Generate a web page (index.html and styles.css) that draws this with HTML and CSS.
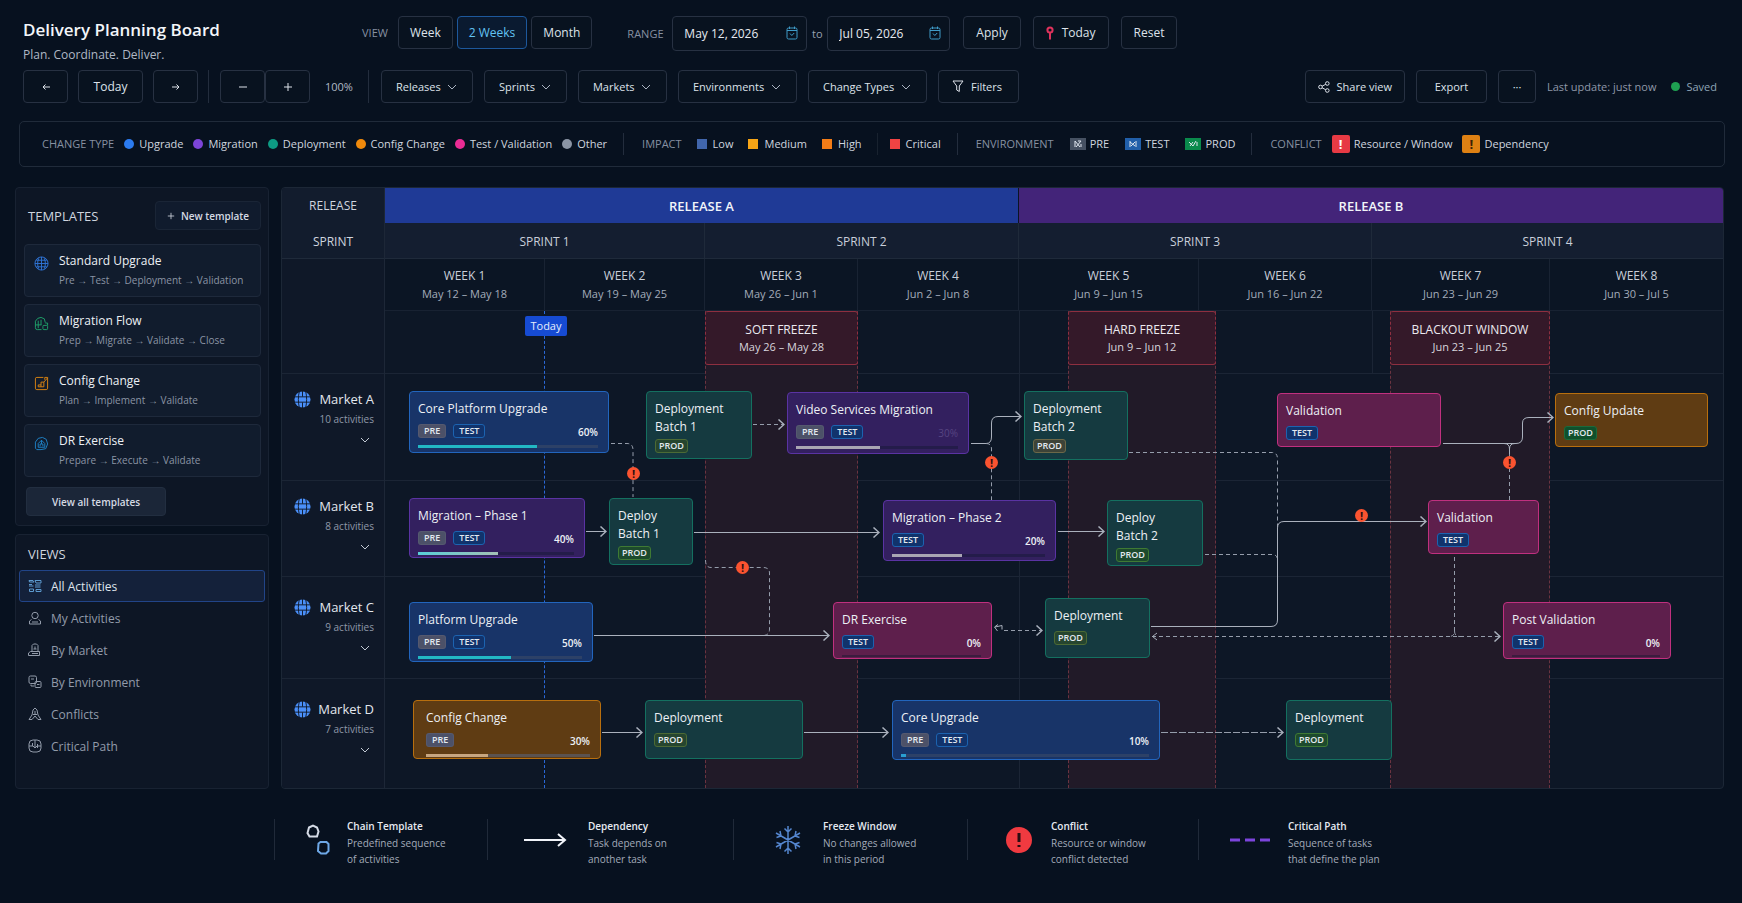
FILE: index.html
```html
<!DOCTYPE html>
<html lang="en">
<head>
    <meta charset="UTF-8">
    <meta name="viewport" content="width=device-width, initial-scale=1.0">
    <link rel="stylesheet" href="styles.css">
    <title>Delivery Planning Board</title>
</head>
<body>
    <!-- shared icons -->
    <svg class="sprite" aria-hidden="true">
        <symbol id="chevron" viewBox="0 0 10 6"><path d="M1 1l4 4 4-4"/></symbol>
        <symbol id="globe" viewBox="0 0 18 18">
            <circle cx="9" cy="9" r="8.5" fill="#4a8ff8" stroke="none"/>
            <path d="M0 6.2h18M0 11.8h18M9 0v6M9 12v6M5.800 0C4.200 5.500 4.200 12.500 5.800 18M12.200 0c1.600 5.500 1.600 12.500 0 18" stroke="#101a2b" stroke-width="1" fill="none"/>
        </symbol>
        <symbol id="calendar" viewBox="0 0 12 14">
            <rect x="1" y="2" width="10" height="11" rx="1.500"/>
            <path d="M1 4.500h10M3.500 .5v2.500M8.500 .5v2.500M4 7.500l1.800 2L8.200 7"/>
        </symbol>
    </svg>

    <header class="top">
        <div class="top-row">
            <div class="brand">
                <h1>Delivery Planning Board</h1>
                <p>Plan. Coordinate. Deliver.</p>
            </div>
            <div class="view-switch">
                <span class="caption">VIEW</span>
                <button class="btn">Week</button>
                <button class="btn active">2 Weeks</button>
                <button class="btn">Month</button>
            </div>
            <div class="range">
                <label class="caption" for="from">RANGE</label>
                <div class="date date-from">
                    <input type="text" id="from" value="May 12, 2026">
                    <svg class="ico-cal"><use href="#calendar"/></svg>
                </div>
                <label class="to" for="until">to</label>
                <div class="date date-until">
                    <input type="text" id="until" value="Jul 05, 2026">
                    <svg class="ico-cal"><use href="#calendar"/></svg>
                </div>
            </div>
            <div class="range-actions">
                <button class="btn">Apply</button>
                <button class="btn">
                    <svg class="ico-pin" viewBox="0 0 8 14"><circle cx="4" cy="4" r="2.600"/><path d="M4 7v6.500"/></svg>
                    Today
                </button>
                <button class="btn">Reset</button>
            </div>
        </div>

        <div class="top-row tools">
            <div class="nav">
                <button class="btn icon-btn" aria-label="Back"><svg class="ico-sign" viewBox="0 0 10 10"><path d="M9 5H2M4.500 2.500L2 5l2.500 2.500"/></svg></button>
                <button class="btn">Today</button>
                <button class="btn icon-btn" aria-label="Forward"><svg class="ico-sign" viewBox="0 0 10 10"><path d="M1 5h7M5.500 2.500L8 5 5.500 7.500"/></svg></button>
            </div>
            <div class="zoom">
                <button class="btn icon-btn" aria-label="Zoom out"><svg class="ico-sign" viewBox="0 0 10 10"><path d="M1 5h8"/></svg></button>
                <button class="btn icon-btn" aria-label="Zoom in"><svg class="ico-sign" viewBox="0 0 10 10"><path d="M1 5h8M5 1v8"/></svg></button>
                <span class="percent">100%</span>
            </div>
            <div class="filters">
                <div class="dropdown"><select class="btn" aria-label="Releases"><option>Releases</option></select><svg class="chev"><use href="#chevron"/></svg></div>
                <div class="dropdown"><select class="btn" aria-label="Sprints"><option>Sprints</option></select><svg class="chev"><use href="#chevron"/></svg></div>
                <div class="dropdown"><select class="btn" aria-label="Markets"><option>Markets</option></select><svg class="chev"><use href="#chevron"/></svg></div>
                <div class="dropdown"><select class="btn" aria-label="Environments"><option>Environments</option></select><svg class="chev"><use href="#chevron"/></svg></div>
                <div class="dropdown"><select class="btn" aria-label="Change Types"><option>Change Types</option></select><svg class="chev"><use href="#chevron"/></svg></div>
                <button class="btn">
                    <svg class="ico-filter" viewBox="0 0 12 13"><path d="M1 1h10L7.300 6v5.500L4.700 10V6z"/></svg>
                    Filters
                </button>
            </div>
            <div class="share">
                <button class="btn">
                    <svg class="ico-share" viewBox="0 0 12 12"><circle cx="2.500" cy="6" r="1.800"/><circle cx="9.300" cy="2.500" r="1.800"/><circle cx="9.300" cy="9.500" r="1.800"/><path d="M4.100 5.200l3.600-1.900M4.100 6.800l3.600 1.900"/></svg>
                    Share view
                </button>
                <button class="btn wide">Export</button>
                <button class="btn more" aria-label="More">···</button>
                <span class="updated">Last update: just now</span>
                <span class="saved">Saved</span>
            </div>
        </div>
    </header>

    <section class="legend">
        <div class="legend-group types">
            <span class="caption">CHANGE TYPE</span>
            <span class="key dot blue">Upgrade</span>
            <span class="key dot purple">Migration</span>
            <span class="key dot green">Deployment</span>
            <span class="key dot orange">Config Change</span>
            <span class="key dot pink">Test / Validation</span>
            <span class="key dot gray">Other</span>
        </div>
        <div class="legend-group impact">
            <span class="caption">IMPACT</span>
            <span class="key square low">Low</span>
            <span class="key square medium">Medium</span>
            <span class="key square high">High</span>
            <span class="key square critical">Critical</span>
        </div>
        <div class="legend-group envs">
            <span class="caption">ENVIRONMENT</span>
            <span class="key"><svg class="env pre" viewBox="0 0 16 12"><path d="M5 3v6M5 3l5 6M8 3h3M11 3L6 9M11 6v3"/></svg>PRE</span>
            <span class="key"><svg class="env test" viewBox="0 0 16 12"><path d="M5 3v6M5 4l5 4M11 3v6M10 4L6 8"/></svg>TEST</span>
            <span class="key"><svg class="env prod" viewBox="0 0 16 12"><path d="M4 4l4 4M8 4L5 8M11 3L8 8M12 4v4"/></svg>PROD</span>
        </div>
        <div class="legend-group conflicts">
            <span class="caption">CONFLICT</span>
            <span class="key"><i class="warn red">!</i>Resource / Window</span>
            <span class="key"><i class="warn amber">!</i>Dependency</span>
        </div>
    </section>

    <div class="main">
        <aside class="sidebar">
            <section class="panel templates">
                <div class="panel-head">
                    <h2>TEMPLATES</h2>
                    <button class="new-template"><svg class="ico-plus" viewBox="0 0 10 10"><path d="M1 5h8M5 1v8"/></svg>New template</button>
                </div>
                <div class="card">
                    <svg class="card-ico std" viewBox="0 0 16 16"><circle cx="8" cy="8" r="7"/><path d="M1 8h14M8 1v14M2.500 4.500h11M2.500 11.500h11M5 2.500c-1.500 3.500-1.500 7.500 0 11M11 2.500c1.500 3.500 1.500 7.500 0 11"/></svg>
                    <div>
                        <h3>Standard Upgrade</h3>
                        <p>Pre → Test → Deployment → Validation</p>
                    </div>
                </div>
                <div class="card">
                    <svg class="card-ico mig" viewBox="0 0 16 16"><path d="M8 14.500H3.500a2 2 0 0 1-2-2V5.500L4 2.500 7.500 1.500 11 3l1 4M4.500 5v8M1.500 9.500H8M7.500 4v5.500"/><rect x="9.500" y="10" width="5" height="4.500" rx="1"/><path d="M12 7.500h2.500V10"/></svg>
                    <div>
                        <h3>Migration Flow</h3>
                        <p>Prep → Migrate → Validate → Close</p>
                    </div>
                </div>
                <div class="card">
                    <svg class="card-ico cfg" viewBox="0 0 16 16"><path d="M10 1.500H3A1.500 1.500 0 0 0 1.500 3v10A1.500 1.500 0 0 0 3 14.500h10a1.500 1.500 0 0 0 1.500-1.500V1.500H11.500V4M4.500 11.500V9.500h3V6.500h3M7.500 9.500v2M4.500 11.500h6V6.500L14.500 2"/></svg>
                    <div>
                        <h3>Config Change</h3>
                        <p>Plan → Implement → Validate</p>
                    </div>
                </div>
                <div class="card">
                    <svg class="card-ico dr" viewBox="0 0 16 16"><path d="M1.500 13V6.500L4.500 2.500 9 1.500l4 2 1.500 5-2 5-5 1H3zM4.500 12V8L8 4.500 11.500 8v4zM6.500 11V8.500h3V11M8 4.500v4"/></svg>
                    <div>
                        <h3>DR Exercise</h3>
                        <p>Prepare → Execute → Validate</p>
                    </div>
                </div>
                <button class="view-all">View all templates</button>
            </section>

            <nav class="panel views">
                <h2>VIEWS</h2>
                <a class="view selected" href="#"><svg viewBox="0 0 14 14"><path d="M1 1.500h4l1 1.500H1.500zM7 1.500h6v2.500H8zM1 7h4.500M7 6h5.500M7 8h5.500M1 5.500h3M1.500 10h4v2.500h-4zM8 10.500h5v2H8z"/></svg>All Activities</a>
                <a class="view" href="#"><svg viewBox="0 0 14 14"><circle cx="7" cy="4.500" r="3.200"/><path d="M3.500 8.500L1.500 10v3h11v-3l-2-1.500M4 11h6"/></svg>My Activities</a>
                <a class="view" href="#"><svg viewBox="0 0 14 14"><path d="M4 8V2.500L5.500 1h3L10 2.500V8M7 3.500v2.500M5.500 6h3M2.500 8.500h9v4h-11v-2.500zM4 10.500h6"/></svg>By Market</a>
                <a class="view" href="#"><svg viewBox="0 0 14 14"><rect x="1" y="1" width="7.500" height="7.500" rx="1.500"/><rect x="7" y="6.500" width="6" height="6" rx="1"/><path d="M3 4h3M3 9.500V11h3M9 9.500h2.500"/></svg>By Environment</a>
                <a class="view" href="#"><svg viewBox="0 0 14 14"><path d="M7 1L5 3l-1 5-3 4.500h3L7 9l3 3.500h3L10 8 9 3zM7 4v3M5 7.500h4"/></svg>Conflicts</a>
                <a class="view" href="#"><svg viewBox="0 0 14 14"><rect x="1" y="1" width="12" height="12" rx="4"/><path d="M1 7h4l2 2 2-2h4M7 1v8M4.500 4v3M9.500 5v4"/></svg>Critical Path</a>
            </nav>
        </aside>

        <main class="board">
            <div class="row releases">
                <div class="row-name">RELEASE</div>
                <div class="weeks-grid">
                    <div class="release release-a">RELEASE A</div>
                    <div class="release release-b">RELEASE B</div>
                </div>
            </div>
            <div class="row sprints">
                <div class="row-name">SPRINT</div>
                <div class="weeks-grid">
                    <div class="sprint">SPRINT 1</div>
                    <div class="sprint">SPRINT 2</div>
                    <div class="sprint">SPRINT 3</div>
                    <div class="sprint">SPRINT 4</div>
                </div>
            </div>
            <div class="row weeks">
                <div class="row-name"></div>
                <div class="weeks-grid">
                    <div class="week"><b>WEEK 1</b>May 12 – May 18</div>
                    <div class="week"><b>WEEK 2</b>May 19 – May 25</div>
                    <div class="week"><b>WEEK 3</b>May 26 – Jun 1</div>
                    <div class="week"><b>WEEK 4</b>Jun 2 – Jun 8</div>
                    <div class="week"><b>WEEK 5</b>Jun 9 – Jun 15</div>
                    <div class="week"><b>WEEK 6</b>Jun 16 – Jun 22</div>
                    <div class="week"><b>WEEK 7</b>Jun 23 – Jun 29</div>
                    <div class="week"><b>WEEK 8</b>Jun 30 – Jul 5</div>
                </div>
            </div>

            <div class="row body">
                <div class="markets">
                    <div class="lane lane-top"></div>
                    <div class="lane lane-a">
                        <svg class="ico-globe"><use href="#globe"/></svg>
                        <div class="market"><h3>Market A</h3><p>10 activities</p><svg class="chev"><use href="#chevron"/></svg></div>
                    </div>
                    <div class="lane lane-b">
                        <svg class="ico-globe"><use href="#globe"/></svg>
                        <div class="market"><h3>Market B</h3><p>8 activities</p><svg class="chev"><use href="#chevron"/></svg></div>
                    </div>
                    <div class="lane lane-c">
                        <svg class="ico-globe"><use href="#globe"/></svg>
                        <div class="market"><h3>Market C</h3><p>9 activities</p><svg class="chev"><use href="#chevron"/></svg></div>
                    </div>
                    <div class="lane lane-d">
                        <svg class="ico-globe"><use href="#globe"/></svg>
                        <div class="market"><h3>Market D</h3><p>7 activities</p><svg class="chev"><use href="#chevron"/></svg></div>
                    </div>
                </div>

                <!-- --x / --w are timeline units (1338 = whole range), --y / --h are pixels -->
                <div class="canvas">
                    <div class="lane lane-top"></div>
                    <div class="lane lane-a"></div>
                    <div class="lane lane-b"></div>
                    <div class="lane lane-c"></div>
                    <div class="lane lane-d"></div>

                    <div class="release-line" style="--x:634"></div>
                    <div class="sprint-line" style="--x:987"></div>

                    <div class="freeze" style="--x:320;--w:153"><div class="freeze-box"><b>SOFT FREEZE</b>May 26 – May 28</div></div>
                    <div class="freeze" style="--x:683;--w:148"><div class="freeze-box"><b>HARD FREEZE</b>Jun 9 – Jun 12</div></div>
                    <div class="freeze" style="--x:1005;--w:160"><div class="freeze-box"><b>BLACKOUT WINDOW</b>Jun 23 – Jun 25</div></div>

                    <div class="today-line" style="--x:159"></div>
                    <span class="today" style="--x:160">Today</span>

                    <svg class="links" viewBox="385 311 1338 477" preserveAspectRatio="none">
                        <defs>
                            <marker id="arrow" viewBox="0 0 8 12" refX="7" refY="6" markerWidth="8" markerHeight="12" markerUnits="userSpaceOnUse" orient="auto-start-reverse">
                                <path d="M1.500 1L7 6l-5.500 5"/>
                            </marker>
                        </defs>
                        <!-- market A -->
                        <path class="dash" d="M611 443.500H627Q633 443.500 633 450V497"/>
                        <path class="dash" marker-end="url(#arrow)" d="M753 424.500H784"/>
                        <path marker-end="url(#arrow)" d="M971 443.500H986Q991.500 443.500 991.500 437V423Q991.500 416.500 998 416.500H1021"/>
                        <path class="dash" d="M986 443.500Q991.500 443.500 991.500 449V500"/>
                        <path class="dash" d="M1129 452.500H1272Q1277.500 452.500 1277.500 459V527"/>
                        <path marker-end="url(#arrow)" d="M1443 443.500H1516Q1522.500 443.500 1522.500 437V423Q1522.500 417.500 1529 417.500H1553"/>
                        <path d="M1504 443.500Q1509.500 443.500 1509.500 449V454M1515 443.500Q1509.500 443.500 1509.500 449"/>
                        <path class="dash" d="M1509.500 454V500"/>
                        <!-- market B -->
                        <path marker-end="url(#arrow)" d="M586 531.500H606"/>
                        <path marker-end="url(#arrow)" d="M694 532.500H879"/>
                        <path marker-end="url(#arrow)" d="M1058 531.500H1104"/>
                        <path class="dash" d="M1205 554.500H1272Q1277.500 554.500 1277.500 560"/>
                        <path class="dash" d="M705.500 560Q705.500 567.500 711 567.500H763Q769.500 567.500 769.500 573V629Q769.500 635.500 763 635.500"/>
                        <path class="dash" d="M1454.500 557V631Q1454.500 636.500 1449 636.500M1454.500 631Q1454.500 636.500 1460 636.500"/>
                        <!-- market C -->
                        <path marker-end="url(#arrow)" d="M594 635.500H829"/>
                        <path class="dash" marker-end="url(#arrow)" d="M1004 630.500H1042"/>
                        <path d="M995 627l7-1.500M998 624.500l-3.500 2.500 3 4M1002 625.500v4"/>
                        <path marker-end="url(#arrow)" d="M1151 626.500H1271Q1277.500 626.500 1277.500 620V528Q1277.500 521.500 1284 521.500H1426"/>
                        <path class="dash" marker-end="url(#arrow)" d="M1152 636.500H1500"/>
                        <path d="M1157 633l-4.500 3.500 4.500 3.500"/>
                        <!-- market D -->
                        <path marker-end="url(#arrow)" d="M602 732.500H642"/>
                        <path marker-end="url(#arrow)" d="M804 732.500H888"/>
                        <path class="dash long" marker-end="url(#arrow)" d="M1161 732.500H1283"/>
                    </svg>

                    <div class="task upgrade" style="--x:24;--y:80;--w:200;--h:62">
                        <h4>Core Platform Upgrade</h4>
                        <div class="tags"><span class="tag pre">PRE</span><span class="tag test">TEST</span><em>60%</em></div>
                        <div class="bar"><i style="width:66%"></i></div>
                    </div>
                    <div class="task deployment two-line" style="--x:261;--y:80;--w:106;--h:68">
                        <h4>Deployment<br>Batch 1</h4>
                        <div class="tags"><span class="tag prod">PROD</span></div>
                    </div>
                    <div class="task migration" style="--x:402;--y:81;--w:182;--h:62">
                        <h4>Video Services Migration</h4>
                        <div class="tags"><span class="tag pre">PRE</span><span class="tag test">TEST</span><em class="faint">30%</em></div>
                        <div class="bar light"><i style="width:52%"></i></div>
                    </div>
                    <div class="task deployment two-line" style="--x:639;--y:80;--w:104;--h:69">
                        <h4>Deployment<br>Batch 2</h4>
                        <div class="tags"><span class="tag prod sand">PROD</span></div>
                    </div>
                    <div class="task validation" style="--x:892;--y:82;--w:164;--h:54">
                        <h4>Validation</h4>
                        <div class="tags"><span class="tag test">TEST</span></div>
                    </div>
                    <div class="task config" style="--x:1170;--y:82;--w:153;--h:54">
                        <h4>Config Update</h4>
                        <div class="tags"><span class="tag prod solid">PROD</span></div>
                    </div>

                    <div class="task migration" style="--x:24;--y:187;--w:176;--h:60">
                        <h4>Migration – Phase 1</h4>
                        <div class="tags"><span class="tag pre">PRE</span><span class="tag test">TEST</span><em>40%</em></div>
                        <div class="bar mint"><i style="width:51%"></i></div>
                    </div>
                    <div class="task deployment two-line" style="--x:224;--y:187;--w:84;--h:67">
                        <h4>Deploy<br>Batch 1</h4>
                        <div class="tags"><span class="tag prod lime">PROD</span></div>
                    </div>
                    <div class="task migration" style="--x:498;--y:189;--w:173;--h:61">
                        <h4>Migration – Phase 2</h4>
                        <div class="tags"><span class="tag test">TEST</span><em>20%</em></div>
                        <div class="bar light"><i style="width:46%"></i></div>
                    </div>
                    <div class="task deployment two-line" style="--x:722;--y:189;--w:96;--h:66">
                        <h4>Deploy<br>Batch 2</h4>
                        <div class="tags"><span class="tag prod lime">PROD</span></div>
                    </div>
                    <div class="task validation" style="--x:1043;--y:189;--w:111;--h:54">
                        <h4>Validation</h4>
                        <div class="tags"><span class="tag test">TEST</span></div>
                    </div>

                    <div class="task upgrade" style="--x:24;--y:291;--w:184;--h:60">
                        <h4>Platform Upgrade</h4>
                        <div class="tags"><span class="tag pre">PRE</span><span class="tag test">TEST</span><em>50%</em></div>
                        <div class="bar"><i style="width:57%"></i></div>
                    </div>
                    <div class="task validation" style="--x:448;--y:291;--w:159;--h:57">
                        <h4>DR Exercise</h4>
                        <div class="tags"><span class="tag test">TEST</span><em>0%</em></div>
                        <div class="bar"></div>
                    </div>
                    <div class="task deployment" style="--x:660;--y:287;--w:105;--h:60">
                        <h4>Deployment</h4>
                        <div class="tags"><span class="tag prod">PROD</span></div>
                    </div>
                    <div class="task validation" style="--x:1118;--y:291;--w:168;--h:57">
                        <h4>Post Validation</h4>
                        <div class="tags"><span class="tag test">TEST</span><em>0%</em></div>
                        <div class="bar"></div>
                    </div>

                    <div class="task config indent" style="--x:28;--y:389;--w:188;--h:59">
                        <h4>Config Change</h4>
                        <div class="tags"><span class="tag pre">PRE</span><em>30%</em></div>
                        <div class="bar sand"><i style="width:38%"></i></div>
                    </div>
                    <div class="task deployment" style="--x:260;--y:389;--w:158;--h:59">
                        <h4>Deployment</h4>
                        <div class="tags"><span class="tag prod">PROD</span></div>
                    </div>
                    <div class="task upgrade" style="--x:507;--y:389;--w:268;--h:60">
                        <h4>Core Upgrade</h4>
                        <div class="tags"><span class="tag pre">PRE</span><span class="tag test">TEST</span><em>10%</em></div>
                        <div class="bar sky"><i style="width:2%"></i></div>
                    </div>
                    <div class="task deployment" style="--x:901;--y:389;--w:106;--h:60">
                        <h4>Deployment</h4>
                        <div class="tags"><span class="tag prod lime">PROD</span></div>
                    </div>

                    <span class="conflict" style="--x:248;--y:162">!</span>
                    <span class="conflict" style="--x:606;--y:151">!</span>
                    <span class="conflict" style="--x:1124;--y:151">!</span>
                    <span class="conflict" style="--x:357;--y:256">!</span>
                    <span class="conflict" style="--x:976;--y:204">!</span>
                </div>
            </div>
        </main>
    </div>

    <footer class="bottom">
        <div class="note">
            <svg class="chain" viewBox="0 0 24 32">
                <path d="M3 3.500l4-2 4 2 1.500 4-1.500 5H3.500L1.500 9z" stroke="#d5dbe6"/>
                <path d="M12.500 19.500l2-1.500h6l2 2v7l-2.500 2.500h-5L12 27z" stroke="#6ea8e6"/>
            </svg>
            <p><b>Chain Template</b>Predefined sequence<br>of activities</p>
        </div>
        <div class="note">
            <svg class="arrow" viewBox="0 0 44 16"><path d="M1 8h41M35 2l7 6-7 6"/></svg>
            <p><b>Dependency</b>Task depends on<br>another task</p>
        </div>
        <div class="note">
            <svg class="flake" viewBox="0 0 28 30"><path d="M14 1v28M2 8l24 14M26 8L2 22M10.500 3.500L14 7l3.500-3.500M10.500 26.500L14 23l3.500 3.500M2.500 12.500l4.500-1.500-1-5M25.500 12.500L21 11l1-5M2.500 17.500L7 19l-1 5M25.500 17.500L21 19l1 5"/></svg>
            <p><b>Freeze Window</b>No changes allowed<br>in this period</p>
        </div>
        <div class="note">
            <svg class="alert" viewBox="0 0 26 26"><circle cx="13" cy="13" r="13"/><path d="M13 6v9M13 18v2"/></svg>
            <p><b>Conflict</b>Resource or window<br>conflict detected</p>
        </div>
        <div class="note">
            <svg class="dashes" viewBox="0 0 40 4"><path d="M0 2h40"/></svg>
            <p><b>Critical Path</b>Sequence of tasks<br>that define the plan</p>
        </div>
    </footer>
</body>
</html>
```
FILE: styles.css
```css
* {
    box-sizing: border-box;
}

body {
    margin: 0;
    padding: 16px 18px 0 15px;
    min-height: 100vh;
    background-color: #07111f;
    color: #d9dee7;
    font-family: "Open Sans", "Segoe UI", "Noto Sans", sans-serif;
    font-size: 11px;
}

h1, h2, h3, h4, p {
    margin: 0;
    font-weight: 400;
}

button, input, select {
    font-family: inherit;
    font-size: inherit;
    color: inherit;
}

svg {
    flex: none;
    fill: none;
    stroke: currentColor;
}

.sprite {
    display: none;
}

.caption {
    color: #8690a1;
}

/* ---------- header ---------- */
.top-row {
    display: flex;
    align-items: flex-start;
    padding-left: 8px;
}

.brand {
    width: 339px;
    height: 54px;
}

.brand h1 {
    color: #f3f6fa;
    font-size: 17px;
    font-weight: 600;
    line-height: 28px;
}

.brand p {
    margin-top: 2px;
    color: #b0b8c5;
    font-size: 12px;
    line-height: 18px;
}

.btn {
    display: flex;
    align-items: center;
    justify-content: center;
    height: 33px;
    padding: 0 12px;
    border: 1px solid #273142;
    border-radius: 4px;
    background-color: #08121f;
    color: #dde2ea;
    font-size: 12px;
    font-weight: 500;
    cursor: pointer;
}

.btn.active {
    border-color: #1d589c;
    background-color: #0a1a30;
    color: #62c3f3;
}

.view-switch, .range, .range-actions, .nav, .zoom, .filters, .share {
    display: flex;
    align-items: center;
}

.view-switch {
    gap: 4px;
}

.view-switch .caption {
    margin-right: 6px;
}

.view-switch .btn {
    padding: 0 11px;
}

.range {
    margin-left: 35px;
}

.range .caption {
    width: 45px;
}

.date {
    position: relative;
}

.date input {
    width: 100%;
    height: 35px;
    padding: 0 11px;
    border: 1px solid #273142;
    border-radius: 4px;
    background-color: #08121f;
    color: #e6eaf1;
    font-size: 12px;
    font-weight: 500;
}

.date-from {
    width: 135px;
}

.date-until {
    width: 123px;
}

.ico-cal {
    position: absolute;
    right: 9px;
    top: 10px;
    width: 12px;
    height: 14px;
    color: #3f9bc8;
}

.to {
    width: 20px;
    color: #98a1b0;
    text-align: center;
}

.range-actions {
    gap: 12px;
    margin-left: 13px;
}

.ico-pin {
    width: 8px;
    height: 14px;
    margin-right: 8px;
    color: #e0325c;
    stroke-width: 2;
}

.tools .icon-btn {
    width: 45px;
    padding: 0;
}

.nav {
    gap: 10px;
    padding-right: 10px;
    border-right: 1px solid #232d3d;
}

.nav .btn:not(.icon-btn) {
    width: 65px;
}

.zoom {
    margin-left: 11px;
    padding-right: 15px;
    border-right: 1px solid #232d3d;
}

.ico-sign {
    width: 10px;
    height: 10px;
}

.percent {
    margin-left: 15px;
    color: #b0b8c5;
}

.filters {
    gap: 11px;
    margin-left: 12px;
}

.filters .btn, .share .btn {
    font-size: 11px;
    font-weight: 500;
}

.dropdown {
    position: relative;
}

.dropdown .btn {
    appearance: none;
    padding: 0 31px 0 14px;
}

.dropdown .chev {
    position: absolute;
    right: 16px;
    top: 14px;
    pointer-events: none;
}

.chev {
    width: 10px;
    height: 6px;
    color: #aab3c1;
}

.filters > .btn {
    padding: 0 16px 0 13px;
}

.ico-filter {
    width: 12px;
    height: 13px;
    margin-right: 7px;
}

.share {
    gap: 11px;
    margin-left: auto;
    padding-right: 7px;
}

.ico-share {
    width: 12px;
    height: 12px;
    margin-right: 7px;
}

.share .wide {
    width: 71px;
}

.share .more {
    width: 38px;
}

.updated {
    color: #8f98a8;
}

.saved {
    display: flex;
    align-items: center;
    gap: 6px;
    margin-left: 4px;
    color: #8ea5b5;
}

.saved::before {
    content: "";
    width: 9px;
    height: 9px;
    border-radius: 50%;
    background-color: #1fa052;
}

/* ---------- legend ---------- */
.legend {
    display: flex;
    align-items: center;
    height: 46px;
    margin: 18px -1px 0 4px;
    padding-left: 22px;
    border: 1px solid #202b3a;
    border-radius: 5px;
    line-height: 22px;
}

.legend-group {
    display: flex;
    align-items: center;
    gap: 10px;
}

.legend-group + .legend-group {
    margin-left: 16px;
    padding-left: 18px;
    border-left: 1px solid #232d3d;
}

.legend .impact {
    gap: 15px;
}

.impact .critical {
    padding-left: 12px;
    border-left: 1px solid #18222f;
}

.key {
    display: flex;
    align-items: center;
    color: #cfd5df;
}

.dot::before {
    content: "";
    width: 10px;
    height: 10px;
    margin-right: 5px;
    border-radius: 50%;
    background-color: var(--c);
}

.square::before {
    content: "";
    width: 10px;
    height: 10px;
    margin-right: 6px;
    background-color: var(--c);
}

.blue { --c: #2b7bf0; }
.purple { --c: #7d45d8; }
.green { --c: #0d9a83; }
.orange { --c: #f08a0c; }
.pink { --c: #ea2c94; }
.gray { --c: #8b95a5; }
.low { --c: #4166ac; }
.medium { --c: #f7a516; }
.high { --c: #f27c17; }
.critical { --c: #f04343; }

.legend .envs {
    gap: 16px;
}

.env {
    width: 16px;
    height: 12px;
    margin-right: 4px;
    color: #dfe6ee;
}

.env.pre { background-color: #465162; }
.env.test { background-color: #215fa9; }
.env.prod { background-color: #0a8a4c; }

.warn {
    width: 18px;
    height: 18px;
    margin-right: 4px;
    border-radius: 2px;
    font-size: 13px;
    font-style: normal;
    font-weight: 700;
    line-height: 18px;
    text-align: center;
}

.warn.red {
    background-color: #e73a44;
    color: #fff;
}

.warn.amber {
    background-color: #de8113;
    color: #3a2106;
}

/* ---------- sidebar ---------- */
.main {
    display: flex;
    gap: 12px;
    margin-top: 20px;
}

.sidebar {
    display: flex;
    flex-direction: column;
    gap: 8px;
    width: 254px;
    flex: none;
}

.panel {
    border: 1px solid #182232;
    border-radius: 4px;
    background-color: #0d1625;
}

.panel h2 {
    color: #cfd5df;
    font-size: 13px;
    font-weight: 500;
}

.templates {
    padding: 13px 7px 9px 8px;
}

.panel-head {
    display: flex;
    align-items: center;
    justify-content: space-between;
    margin-bottom: 14px;
    padding-left: 4px;
}

.new-template, .view-all {
    height: 29px;
    padding: 0;
    border-radius: 4px;
    color: #d5dae3;
    font-size: 10px;
    font-weight: 600;
    cursor: pointer;
}

.new-template {
    display: flex;
    align-items: center;
    justify-content: center;
    width: 106px;
    border: 1px solid #1a2536;
    background-color: #101b2d;
}

.ico-plus {
    width: 8px;
    height: 8px;
    margin-right: 6px;
}

.card {
    display: flex;
    gap: 10px;
    height: 53px;
    margin-bottom: 7px;
    padding: 6px 9px;
    border: 1px solid #1e293b;
    border-radius: 4px;
    background-color: #111c2d;
}

.card-ico {
    width: 15px;
    height: 15px;
    margin-top: 5px;
}

.card-ico.std { color: #2f74d6; }
.card-ico.mig { color: #1fa26b; }
.card-ico.cfg { color: #dd8511; }
.card-ico.dr { color: #1f83c9; }

.card h3 {
    color: #edf0f5;
    font-size: 12px;
    font-weight: 500;
    line-height: 20px;
}

.card p {
    color: #8b94a4;
    font-size: 10px;
    line-height: 18px;
    white-space: nowrap;
}

.view-all {
    width: 140px;
    margin: 3px 0 0 2px;
    border: 1px solid #222e40;
    background-color: #1b2638;
}

.views {
    flex: 1;
    padding: 9px 3px;
}

.views h2 {
    margin: 0 0 6px 9px;
    line-height: 20px;
}

.view {
    display: flex;
    align-items: center;
    gap: 9px;
    height: 32px;
    padding-left: 8px;
    border: 1px solid transparent;
    border-radius: 3px;
    color: #929baa;
    font-size: 12px;
    text-decoration: none;
}

.view svg {
    width: 14px;
    height: 14px;
}

.view.selected {
    border-color: #214488;
    background-color: #14213a;
    color: #dfe4ec;
}

.view.selected svg {
    color: #5d9bd0;
}

/* ---------- board ---------- */
.board {
    flex: 1;
    overflow: hidden;
    border: 1px solid #1c2736;
    border-radius: 4px;
    background-color: #0d1726;
}

.row {
    display: grid;
    grid-template-columns: 103px 1fr;
}

.row-name {
    display: flex;
    align-items: center;
    justify-content: center;
    border-right: 1px solid #1d2737;
    background-color: #121c2d;
    color: #cfd5df;
    font-size: 12px;
    font-weight: 500;
}

.weeks-grid {
    display: grid;
    grid-template-columns: 160fr 160fr 153fr 161fr 180fr 173fr 178fr 173fr;
}

.releases {
    height: 35px;
}

.release, .sprint {
    display: flex;
    grid-column: span 4;
    align-items: center;
    justify-content: center;
    font-weight: 500;
}

.release {
    color: #f1f4f9;
    font-size: 13px;
    font-weight: 600;
}

.release-a {
    border-right: 1px solid #0b1424;
    background-color: #1f3a96;
}

.release-b {
    background-color: #432479;
}

.sprints {
    height: 36px;
}

.sprints .row-name, .sprint {
    padding-top: 1px;
    border-bottom: 1px solid #1f2a3a;
}

.sprint {
    grid-column: span 2;
    border-right: 1px solid #1f2a3a;
    background-color: #141e30;
    color: #c9cfda;
    font-size: 12px;
}

.weeks {
    height: 52px;
}

.weeks .row-name, .markets {
    background-color: #0f1828;
}

.week {
    padding-top: 8px;
    border-right: 1px solid #192333;
    border-bottom: 1px solid #182232;
    background-color: #0b1524;
    color: #a3acba;
    line-height: 18px;
    text-align: center;
}

.sprint:last-child, .week:last-child {
    border-right: 0;
}

.week b {
    display: block;
    color: #c9cfda;
    font-size: 12px;
    font-weight: 500;
}

.markets {
    border-right: 1px solid #1d2737;
}

.lane {
    border-bottom: 1px solid #1b2535;
}

.lane-top { height: 63px; }
.lane-a { height: 107px; }
.lane-b { height: 96px; }
.lane-c { height: 102px; }
.lane-d { height: 109px; border-bottom: 0; }

.markets .lane {
    display: flex;
    justify-content: space-between;
    padding: 15px 10px 0 12px;
}

.markets .lane-c, .markets .lane-d {
    padding-top: 20px;
}

.ico-globe {
    width: 17px;
    height: 17px;
    margin-top: 2px;
}

.market {
    text-align: right;
}

.market h3 {
    color: #e3e7ee;
    font-size: 13px;
    font-weight: 500;
    line-height: 20px;
    white-space: nowrap;
}

.market p {
    color: #8f98a8;
    font-size: 10px;
    line-height: 20px;
}

.market .chev {
    display: block;
    margin: 8px 4px 0 auto;
    color: #c3cad5;
}

.canvas {
    position: relative;
    --unit: calc(100% / 1338);
}

.release-line, .sprint-line, .today-line, .freeze {
    position: absolute;
    top: 0;
    bottom: 0;
    left: calc(var(--x) * var(--unit));
}

.release-line, .sprint-line {
    border-left: 1px solid #1b2535;
}

.sprint-line {
    height: 63px;
}

.today-line {
    border-left: 1px dashed #2a68d8;
}

.today {
    position: absolute;
    top: 5px;
    left: calc(var(--x) * var(--unit));
    width: 42px;
    margin-left: -20px;
    border-radius: 2px;
    background-color: #164bd3;
    color: #e6edfb;
    font-weight: 500;
    line-height: 20px;
    text-align: center;
}

.freeze {
    width: calc(var(--w) * var(--unit));
    border: dashed #6b3340;
    border-width: 0 1px;
    background-color: #211a28;
}

.freeze-box {
    height: 54px;
    margin: 0 -1px;
    padding-top: 9px;
    border: 1px dashed #8e2f40;
    border-top-style: solid;
    border-bottom-style: solid;
    border-radius: 3px;
    background-color: #341929;
    color: #d7d5dc;
    line-height: 17px;
    text-align: center;
}

.freeze-box b {
    display: block;
    color: #eceaf0;
    font-size: 12px;
    font-weight: 500;
}

.links {
    position: absolute;
    inset: 0;
    width: 100%;
    height: 100%;
    color: #aab1bd;
}

.links .dash {
    stroke-dasharray: 4 3;
    color: #959dab;
}

.links .long {
    stroke-dasharray: 7 2;
}

.links marker path {
    stroke-dasharray: none;
    stroke-width: 1.500;
}

/* task cards */
.task {
    position: absolute;
    top: calc(var(--y) * 1px);
    left: calc(var(--x) * var(--unit));
    width: calc(var(--w) * var(--unit));
    height: calc(var(--h) * 1px);
    padding: 8px 10px 0 8px;
    overflow: hidden;
    border: 1px solid;
    border-radius: 4px;
}

.task.indent {
    padding-left: 12px;
}

.task h4 {
    margin-bottom: 6px;
    color: #edf0f5;
    font-size: 12px;
    font-weight: 500;
    line-height: 18px;
    white-space: nowrap;
}

.two-line h4 {
    margin-bottom: 3px;
}

.upgrade {
    border-color: #2265bd;
    background-color: #183468;
}

.deployment {
    border-color: #147060;
    background-color: #153a40;
}

.migration {
    border-color: #5a33a3;
    background-color: #33205f;
}

.validation {
    border-color: #c0307f;
    background-color: #5e1f4c;
}

.config {
    border-color: #b86f0e;
    background-color: #5f3c13;
}

.tags {
    display: flex;
    gap: 7px;
    height: 14px;
}

.tags em {
    margin-left: auto;
    color: #edf0f5;
    font-size: 10px;
    font-style: normal;
    font-weight: 600;
    line-height: 17px;
}

.tags .faint {
    color: #574582;
    font-weight: 400;
}

.tag {
    height: 14px;
    padding: 0 5px;
    border: 1px solid;
    border-radius: 3px;
    color: #e3e9f0;
    font-size: 9px;
    font-weight: 600;
    line-height: 12px;
}

.tag.pre {
    border-color: rgba(255, 255, 255, .05);
    background-color: #4c5168;
}

.tag.test {
    border-color: #1c63b0;
    background-color: #11336c;
}

.tag.prod {
    padding: 0 3px;
    border-color: #4c6a35;
    background-color: #26452f;
}

.tag.lime {
    border-color: #3f7a34;
    background-color: #1d4a2d;
}

.tag.sand {
    border-color: #6c6848;
    background-color: #3d4338;
}

.tag.solid {
    border-color: #1b6a3b;
    background-color: #10502c;
}

.bar {
    height: 3px;
    margin-top: 7px;
    background-color: rgba(18, 24, 48, .45);
}

.bar i {
    display: block;
    height: 3px;
    background-color: #22b8c4;
}

.bar.light i { background-color: #a9a5b3; }
.bar.mint i { background: linear-gradient(90deg, #58cfd8, #a5c0b5); }
.bar.sand i { background-color: #c7a680; }
.bar.sky i { background-color: #2a9fd2; }

.upgrade .bar {
    background-color: #2d4167;
}

.config .bar {
    background-color: #5b5350;
}

.validation .bar {
    margin-top: 6px;
    height: 2px;
}

.conflict {
    position: absolute;
    top: calc(var(--y) * 1px - 6px);
    left: calc(var(--x) * var(--unit));
    width: 13px;
    height: 13px;
    margin-left: -6px;
    border-radius: 50%;
    background-color: #fa5330;
    color: #2a0f10;
    font-size: 11px;
    font-weight: 700;
    line-height: 13px;
    text-align: center;
}

/* ---------- footer ---------- */
.bottom {
    display: grid;
    grid-template-columns: 213fr 246fr 234fr 231fr 526fr;
    margin: 28px 0 0 259px;
}

.note {
    display: grid;
    grid-template-columns: 90px 1fr;
    align-items: center;
    height: 48px;
    position: relative;
    line-height: 16px;
    color: #a3abb9;
    font-size: 10px;
}

.note::before {
    content: "";
    position: absolute;
    left: 0;
    top: 2px;
    height: 41px;
    border-left: 1px solid #202a39;
}

.note svg {
    justify-self: center;
    margin-bottom: 4px;
}

.note b {
    display: block;
    color: #e6eaf1;
    font-weight: 600;
    line-height: 18px;
}

.note:nth-child(1) { grid-template-columns: 73px 1fr; }
.note:nth-child(2) { grid-template-columns: 101px 1fr; }
.note:nth-child(4) { grid-template-columns: 84px 1fr; }

.chain {
    width: 24px;
    height: 32px;
    margin-left: 14px;
    stroke-width: 2;
}

.arrow {
    width: 44px;
    height: 16px;
    margin-left: 14px;
    color: #f1f4f9;
    stroke-width: 2;
}

.flake {
    width: 28px;
    height: 30px;
    margin-left: 20px;
    color: #5486cf;
    stroke-width: 1.500;
}

.alert {
    width: 26px;
    height: 26px;
    margin-left: 20px;
    stroke: #2a0d12;
    stroke-width: 3;
}

.alert circle {
    fill: #f03a40;
    stroke: none;
}

.dashes {
    width: 40px;
    height: 4px;
    margin-left: 14px;
    color: #7c45dc;
    stroke-width: 3;
    stroke-dasharray: 10 5;
}
```
